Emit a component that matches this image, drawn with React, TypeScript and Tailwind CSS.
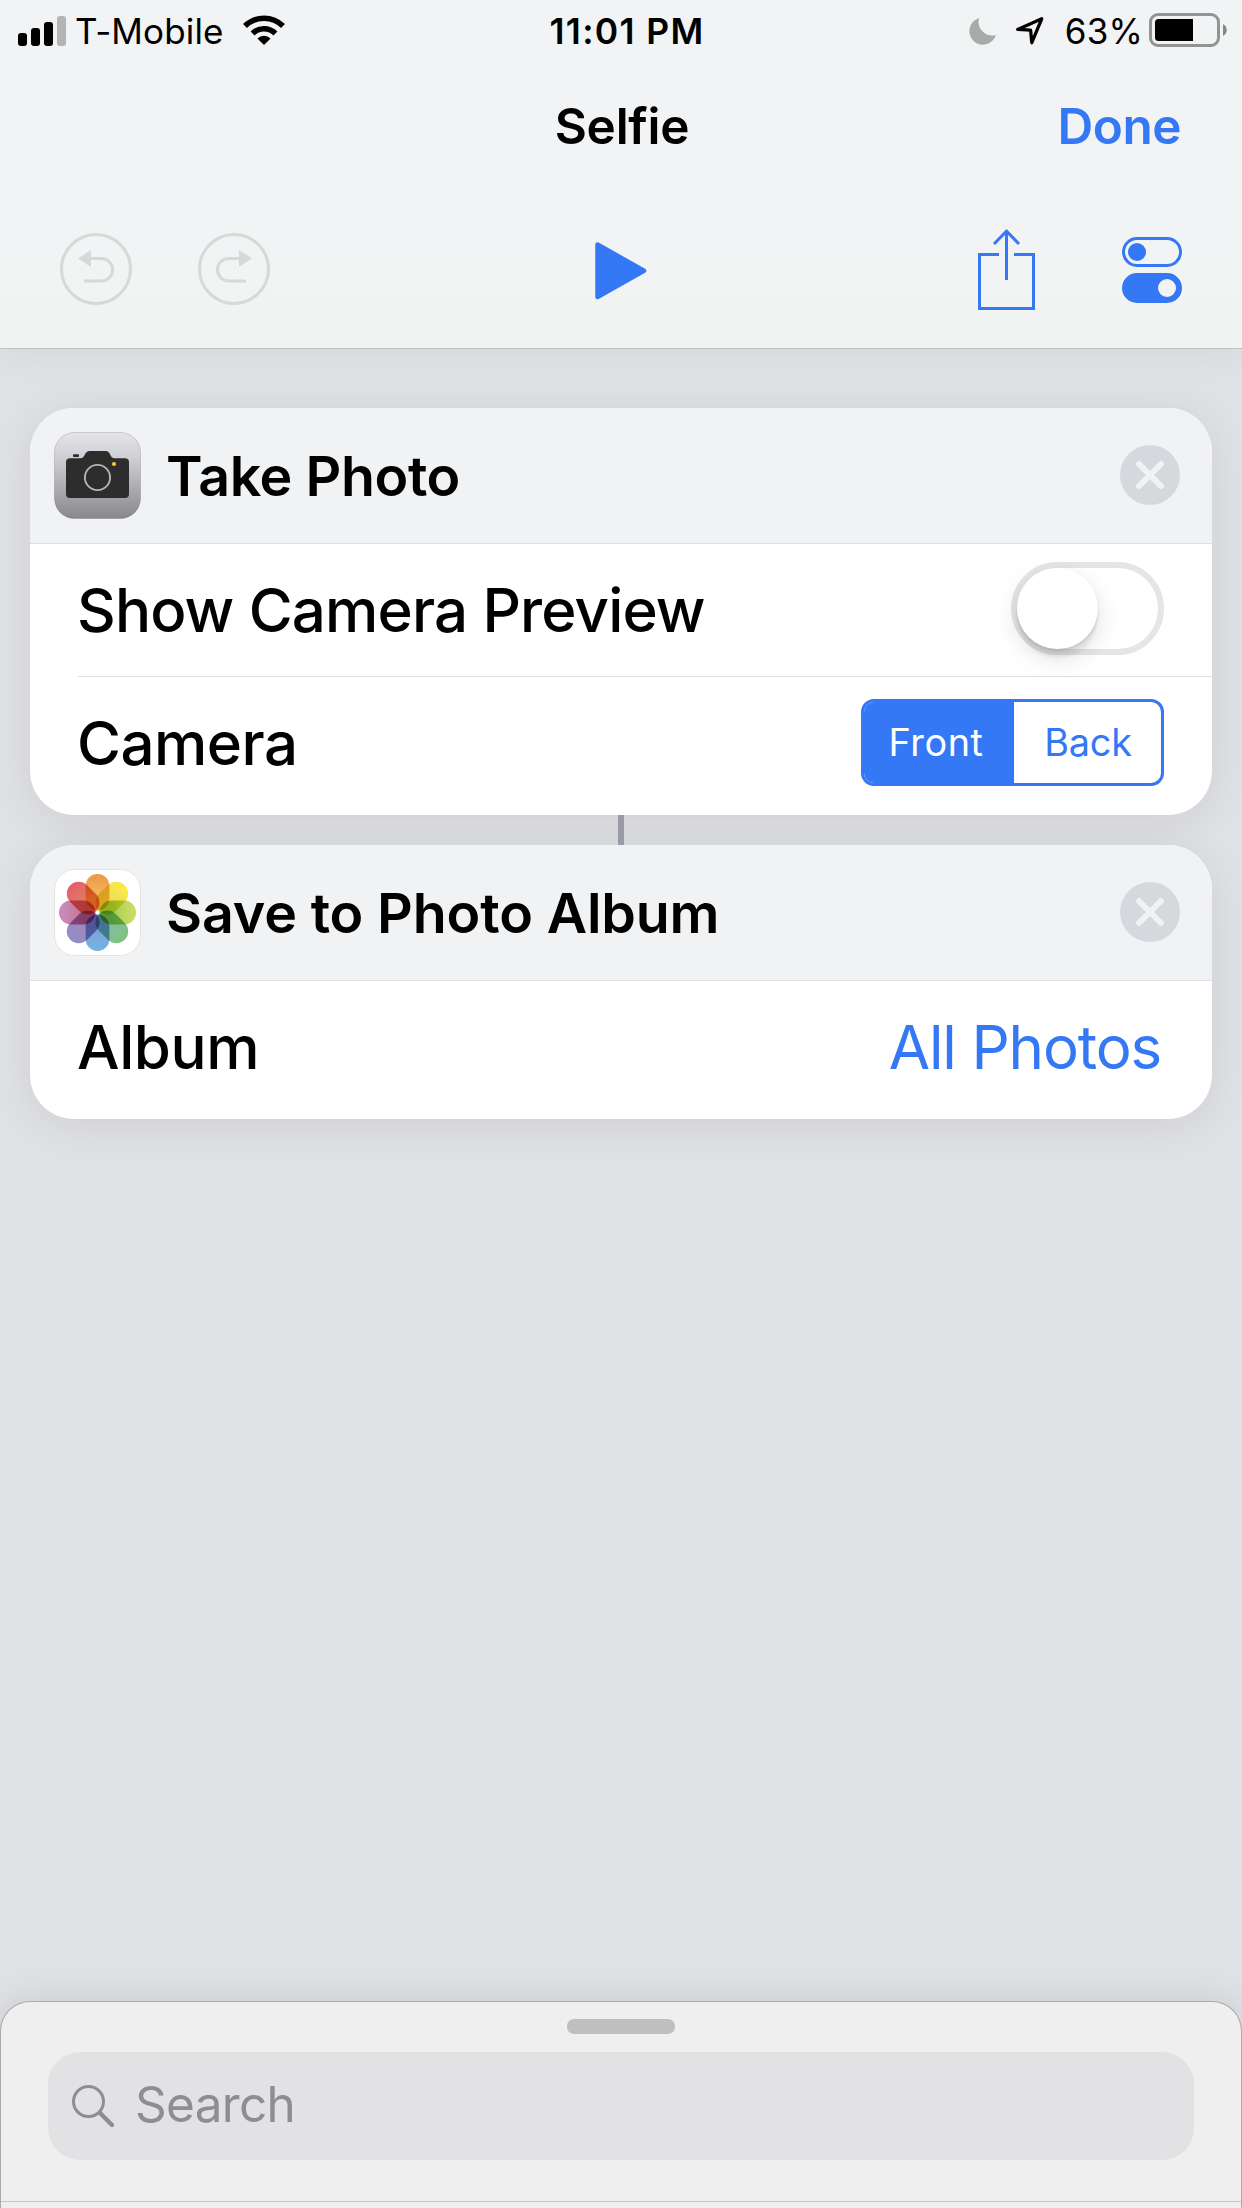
import type { ReactNode } from "react";

function SignalIcon() {
  return (
    <svg width="48" height="30" viewBox="0 0 48 30">
      <rect x="0" y="17" width="9" height="13" rx="3" fill="#000" />
      <rect x="13" y="12" width="9" height="18" rx="3" fill="#000" />
      <rect x="26" y="6" width="9" height="24" rx="3" fill="#000" />
      <rect x="39" y="0" width="9" height="30" rx="3" fill="#b3b4b6" />
    </svg>
  );
}

function WifiIcon() {
  return (
    <svg width="42" height="30" viewBox="0 0 42 30">
      <g fill="none" stroke="#000" strokeWidth="5.6">
        <path d="M2 11 A27 27 0 0 1 40 11" />
        <path d="M9.6 18.4 A16.2 16.2 0 0 1 32.4 18.4" />
      </g>
      <path d="M14.4 23.6 A9.3 9.3 0 0 1 27.6 23.6 L21 30 Z" fill="#000" />
    </svg>
  );
}

function MoonIcon() {
  return (
    <svg width="27" height="27" viewBox="0 0 27 27">
      <path d="M10.2 0 A13.6 13.6 0 1 0 27 16.9 A13.6 13.6 0 0 1 10.2 0 Z" fill="#a9abab" />
    </svg>
  );
}

function LocationIcon() {
  return (
    <svg width="28" height="28" viewBox="0 0 28 28">
      <path d="M1.7 12.4 L25.7 1.8 L15.8 25.7 L14.6 13.2 Z" fill="none" stroke="#000" strokeWidth="3.3" strokeLinejoin="round" />
    </svg>
  );
}

function BatteryIcon() {
  return (
    <svg width="78" height="34" viewBox="0 0 78 34">
      <rect x="1.5" y="1.5" width="68" height="31" rx="7.5" fill="none" stroke="#929393" strokeWidth="3" />
      <path d="M9.5 6 H44 V28 H9.5 A3.5 3.5 0 0 1 6 24.5 V9.5 A3.5 3.5 0 0 1 9.5 6 Z" fill="#000" />
      <path d="M74 11 C79 13.5 79 20.5 74 23 Z" fill="#858686" />
    </svg>
  );
}

function UndoIcon() {
  return (
    <svg width="72" height="72" viewBox="0 0 72 72" fill="none" stroke="#d7d8d8" strokeWidth="3">
      <circle cx="36" cy="36" r="34.5" />
      <path d="M30 25.5 H41.3 A11.2 11.2 0 0 1 41.3 48 H24" />
      <path d="M18 25.5 L31 17 V34 Z" fill="#d7d8d8" stroke="none" />
    </svg>
  );
}

function RedoIcon() {
  return (
    <svg width="72" height="72" viewBox="0 0 72 72" fill="none" stroke="#d7d8d8" strokeWidth="3">
      <circle cx="36" cy="36" r="34.5" />
      <path d="M42 25.5 H30.7 A11.2 11.2 0 0 0 30.7 48 H48" />
      <path d="M54 25.5 L41 17 V34 Z" fill="#d7d8d8" stroke="none" />
    </svg>
  );
}

function PlayIcon() {
  return (
    <svg width="52" height="58" viewBox="0 0 52 58">
      <path d="M2.5 2.5 V55 L49 28.7 Z" fill="#3478f6" stroke="#3478f6" strokeWidth="4.5" strokeLinejoin="round" />
    </svg>
  );
}

function ShareIcon() {
  return (
    <svg width="57" height="82" viewBox="0 0 57 82" fill="none" stroke="#3478f6" strokeWidth="3">
      <path d="M21 25.5 H1.5 V79.5 H55.5 V25.5 H36" />
      <path d="M28.5 51 V2" />
      <path d="M16 15 L28.5 2.2 L41 15" />
    </svg>
  );
}

function TogglesIcon() {
  return (
    <svg width="60" height="66" viewBox="0 0 60 66">
      <rect x="1.5" y="1.5" width="57" height="27" rx="13.5" fill="none" stroke="#3478f6" strokeWidth="3" />
      <circle cx="15" cy="15" r="9" fill="#3478f6" />
      <rect x="0" y="36" width="60" height="30" rx="15" fill="#3478f6" />
      <circle cx="45" cy="51" r="9" fill="#f2f3f4" />
    </svg>
  );
}

function CameraAppIcon() {
  return (
    <svg width="87" height="87" viewBox="0 0 87 87">
      <defs>
        <linearGradient id="cam" x1="0" y1="0" x2="0" y2="1">
          <stop offset="0" stopColor="#e5e4e9" />
          <stop offset="0.3" stopColor="#cfced4" />
          <stop offset="1" stopColor="#89888d" />
        </linearGradient>
      </defs>
      <rect x="0.5" y="0.5" width="86" height="86" rx="20" fill="url(#cam)" stroke="#000" strokeOpacity="0.14" />
      <rect x="19" y="22.3" width="6" height="2.7" rx="0.8" fill="#2d2d2e" />
      <path
        d="M16 26.3 H26 C32 26.3 29.5 19 36 19 H51.5 C57.5 19 55 26.3 61 26.3 H71 Q75 26.3 75 30.3 V62 Q75 66 71 66 H16 Q12 66 12 62 V30.3 Q12 26.3 16 26.3 Z"
        fill="#2d2d2e"
      />
      <circle cx="43.5" cy="45.5" r="12.6" fill="none" stroke="#b3b2b7" strokeWidth="1.9" />
      <circle cx="60" cy="32" r="2.1" fill="#f4c92f" />
    </svg>
  );
}

const PETALS = [
  { angle: 0, outer: "#ec9c4c", inner: "#f4bf5e" },
  { angle: 45, outer: "#fbe94a", inner: "#e5dc58" },
  { angle: 90, outer: "#c8dc63", inner: "#a5cd56" },
  { angle: 135, outer: "#82c185", inner: "#82bcae" },
  { angle: 180, outer: "#74b2e2", inner: "#7f9fd2" },
  { angle: 225, outer: "#948cc6", inner: "#a886b8" },
  { angle: 270, outer: "#c98bb9", inner: "#c9718f" },
  { angle: 315, outer: "#e2646a", inner: "#e28160" },
];

function PhotosAppIcon() {
  return (
    <svg width="87" height="87" viewBox="0 0 87 87" className="isolate">
      <defs>
        {PETALS.map((p) => (
          <linearGradient key={p.angle} id={`petal${p.angle}`} x1="0" y1="0" x2="0" y2="1">
            <stop offset="0.1" stopColor={p.outer} />
            <stop offset="0.7" stopColor={p.inner} />
          </linearGradient>
        ))}
      </defs>
      <rect x="0.5" y="0.5" width="86" height="86" rx="20" fill="#fff" stroke="#e3e3e5" />
      {PETALS.map((p) => (
        <rect
          key={p.angle}
          x="31.6"
          y="5"
          width="23.8"
          height="36.5"
          rx="11.9"
          fill={`url(#petal${p.angle})`}
          transform={`rotate(${p.angle} 43.5 43.5)`}
          className="mix-blend-multiply"
        />
      ))}
    </svg>
  );
}

function RemoveButton() {
  return (
    <button aria-label="Remove action">
      <svg width="60" height="60" viewBox="0 0 60 60">
        <circle cx="30" cy="30" r="30" fill="#d5d8dd" />
        <path d="M19 19 L41 41 M41 19 L19 41" stroke="#f1f2f4" strokeWidth="6" strokeLinecap="round" />
      </svg>
    </button>
  );
}

function SearchIcon() {
  return (
    <svg width="42" height="42" viewBox="0 0 42 42" fill="none" stroke="#8e8e91">
      <circle cx="16.5" cy="16.5" r="15" strokeWidth="3" />
      <path d="M28 28 L40 40" strokeWidth="4.4" strokeLinecap="round" />
    </svg>
  );
}

function StatusBar() {
  return (
    <div className="grid h-[62px] grid-cols-[1fr_auto_1fr] items-center">
      <div className="flex items-center pl-[18px]">
        <SignalIcon />
        <span className="ml-[9px] pt-px text-[35px] tracking-[0.13px]">T-Mobile</span>
        <span className="ml-[19px] -mt-0.5"><WifiIcon /></span>
      </div>
      <span className="ml-[12px] pt-px text-[35.5px] font-semibold tracking-[1.35px]">11:01 PM</span>
      <div className="flex items-center justify-end pr-[15px]">
        <MoonIcon />
        <span className="ml-[20px]"><LocationIcon /></span>
        <span className="ml-[21px] pt-px text-[35px] tracking-[0.19px]">63%</span>
        <span className="ml-[6px] -mt-0.5"><BatteryIcon /></span>
      </div>
    </div>
  );
}

function Header() {
  return (
    <header className="relative z-10 h-[349px] border-b border-[#c0c1c3] bg-linear-to-b from-[#f2f3f5] from-50% to-[#f1f3f3] shadow-[0_0_40px_rgba(0,0,0,0.06)]">
      <StatusBar />
      <div className="grid h-[128px] grid-cols-[1fr_auto_1fr] items-center pt-0.5 text-[49.5px] font-semibold">
        <span />
        <h1 className="pl-0.5 tracking-[-0.26px]">Selfie</h1>
        <button className="justify-self-end pr-[61px] tracking-[-0.49px] text-[#3478f6]">Done</button>
      </div>
      <div className="grid h-[158px] grid-cols-[1fr_auto_1fr] items-center">
        <div className="flex items-center gap-[66px] pl-[60px]">
          <UndoIcon />
          <RedoIcon />
        </div>
        <span className="pt-[3px]"><PlayIcon /></span>
        <div className="flex items-center justify-end gap-[87px] pt-0.5 pr-[60px]">
          <ShareIcon />
          <TogglesIcon />
        </div>
      </div>
    </header>
  );
}

function ActionCard({ icon, title, children }: { icon: ReactNode; title: ReactNode; children: ReactNode }) {
  return (
    <section className="rounded-[44px] shadow-[0_6px_44px_rgba(0,0,0,0.08)]">
      <div className="overflow-hidden rounded-[44px] bg-white pb-[6px]">
        <div className="flex h-[136px] items-center border-b border-[#dddee1] bg-[#f1f2f4] pr-8 pl-6">
          {icon}
          {title}
          <span className="ml-auto"><RemoveButton /></span>
        </div>
        {children}
      </div>
    </section>
  );
}

function Toggle() {
  return (
    <div className="-mt-[3px] h-[93px] w-[153px] rounded-full border-[6px] border-[#e5e5e5]">
      <div className="size-[81px] rounded-full bg-white shadow-[0_9px_24px_rgba(0,0,0,0.13),0_9px_3px_rgba(0,0,0,0.05),0_2px_3px_rgba(0,0,0,0.1)]" />
    </div>
  );
}

function Segmented() {
  return (
    <div className="-mt-0.5 flex h-[87px] w-[303px] overflow-hidden rounded-[13px] border-[3px] border-[#3478f6] text-[37.8px]">
      <span className="flex w-[150px] items-center justify-center bg-[#3478f6] pt-0.5 pr-[6px] tracking-[0.55px] text-white">Front</span>
      <span className="flex flex-1 items-center justify-center pt-0.5 pl-px tracking-[-0.18px] text-[#3478f6]">Back</span>
    </div>
  );
}

export default function App() {
  return (
    <div className="flex h-[2208px] w-[1242px] flex-col overflow-hidden bg-[#e0e1e5] font-['Inter','Liberation_Sans',sans-serif] leading-none text-black [&_svg]:block">
      <Header />
      <main className="flex flex-1 flex-col px-[30px] pt-[59px]">
        <ActionCard
          icon={<CameraAppIcon />}
          title={<h2 className="ml-[25px] text-[55.5px] font-semibold tracking-[-0.4px]">Take Photo</h2>}
        >
          <div className="pl-12">
            <div className="flex h-[133px] items-center justify-between border-b border-[#dddee0] pr-12">
              <span className="-ml-px text-[60px] font-medium tracking-[-0.84px]">Show Camera Preview</span>
              <Toggle />
            </div>
            <div className="flex h-[132px] items-center justify-between pr-12">
              <span className="-ml-px text-[60px] font-medium tracking-[-0.5px]">Camera</span>
              <Segmented />
            </div>
          </div>
        </ActionCard>
        <div className="z-10 h-[30px] w-[6px] self-center bg-[#9a9ba4]" />
        <ActionCard
          icon={<PhotosAppIcon />}
          title={<h2 className="ml-[25px] text-[55.5px] font-semibold tracking-[-0.14px]">Save to Photo Album</h2>}
        >
          <div className="flex h-[132px] items-center justify-between pr-[51px] pl-12 text-[60px]">
            <span className="-ml-px font-medium tracking-[-0.4px]">Album</span>
            <span className="tracking-[-1.15px] text-[#3478f6]">All Photos</span>
          </div>
        </ActionCard>
      </main>
      <footer className="flex h-[207px] flex-col rounded-t-[30px] border border-b-0 border-[#a9aaac] bg-[#efefef] shadow-[0_0_36px_rgba(0,0,0,0.1)]">
        <div className="mt-[17px] h-[15px] w-[108px] self-center rounded-[7px] bg-[#bebfc1]" />
        <div className="mx-[47px] mt-[18px] flex h-[108px] items-center rounded-[32px] bg-[#e2e2e4] pl-6">
          <SearchIcon />
          <span className="-mt-0.5 ml-[21px] text-[49.5px] tracking-[-0.7px] text-[#8e8e91]">Search</span>
        </div>
        <div className="mt-[41px] h-px bg-[#c5c6c8]" />
      </footer>
    </div>
  );
}
